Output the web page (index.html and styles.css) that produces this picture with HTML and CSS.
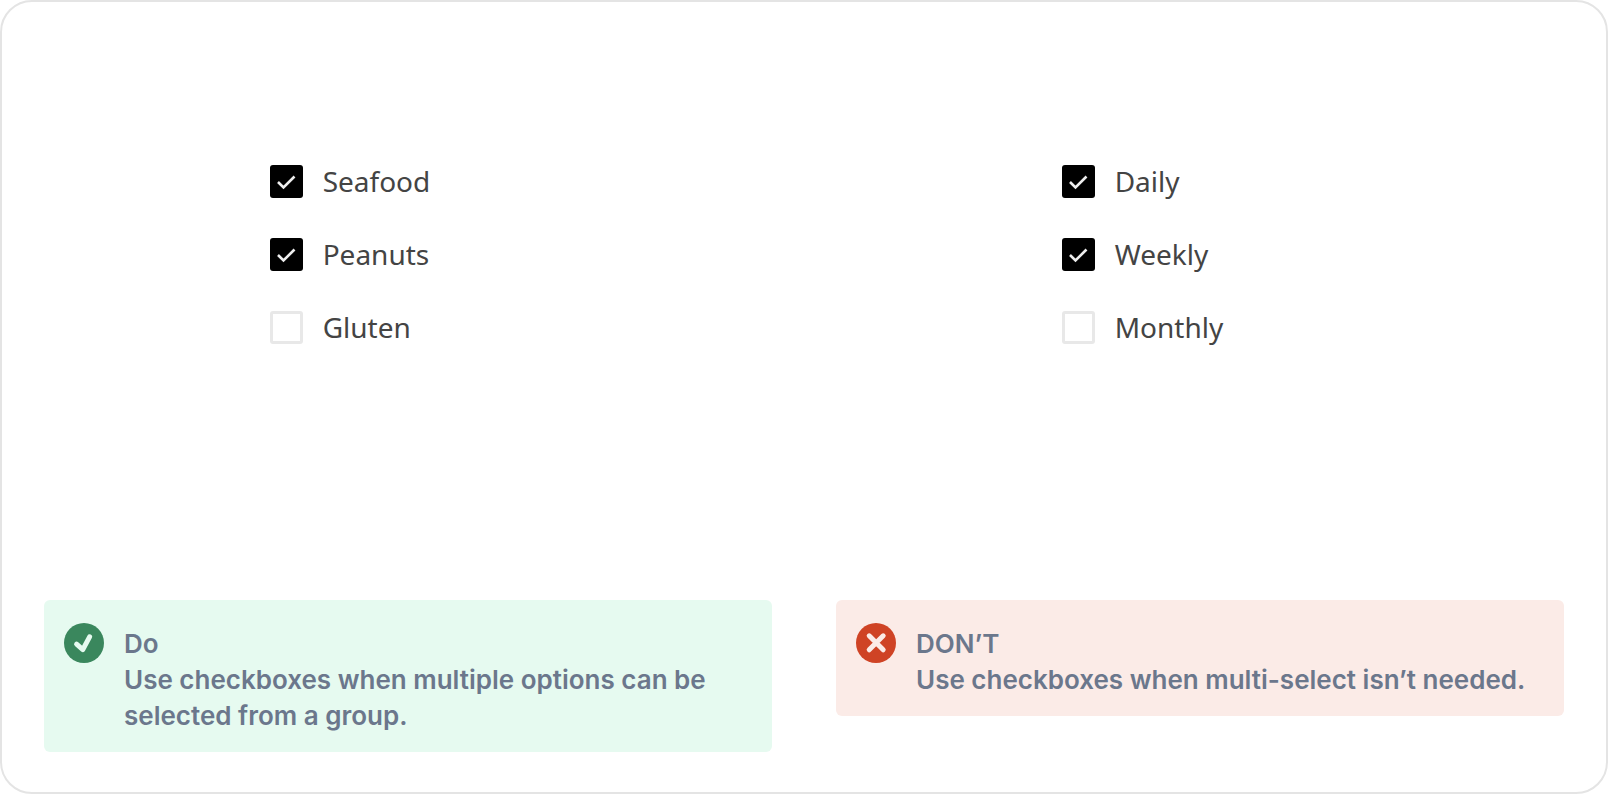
FILE: index.html
```html
<!DOCTYPE html>
<html lang="en">
<head>
<meta charset="utf-8">
<meta name="viewport" content="width=device-width, initial-scale=1">
<title>Checkbox guidelines</title>
<link rel="stylesheet" href="styles.css">
</head>
<body>
<main class="card">
  <section class="example">
    <div class="demo">
      <label class="option"><input class="box" type="checkbox" checked>Seafood</label>
      <label class="option"><input class="box" type="checkbox" checked>Peanuts</label>
      <label class="option"><input class="box" type="checkbox">Gluten</label>
    </div>
    <div class="note note-do">
      <svg class="icon" viewBox="0 0 40 40" aria-hidden="true">
        <circle cx="20" cy="20" r="20" fill="#3a875d"/>
        <path d="M12.6 21.2L18.8 26.6L25.6 13.8" fill="none" stroke="#e6faf0" stroke-width="5" stroke-linecap="round" stroke-linejoin="round"/>
      </svg>
      <div class="text">
        <p>Do</p>
        <p>Use checkboxes when multiple options can be selected from a group.</p>
      </div>
    </div>
  </section>
  <section class="example">
    <div class="demo">
      <label class="option"><input class="box" type="checkbox" checked>Daily</label>
      <label class="option"><input class="box" type="checkbox" checked>Weekly</label>
      <label class="option"><input class="box" type="checkbox">Monthly</label>
    </div>
    <div class="note note-dont">
      <svg class="icon" viewBox="0 0 40 40" aria-hidden="true">
        <circle cx="20" cy="20" r="20" fill="#cf4325"/>
        <path d="M13.2 12.8L27.2 26.8M27.2 12.8L13.2 26.8" fill="none" stroke="#fbebe7" stroke-width="5" stroke-linecap="round"/>
      </svg>
      <div class="text">
        <p>DON’T</p>
        <p>Use checkboxes when multi-select isn’t needed.</p>
      </div>
    </div>
  </section>
</main>
</body>
</html>
```
FILE: styles.css
```css
* {
  box-sizing: border-box;
}

body {
  margin: 0;
  background: #fff;
  font-family: Inter, "Liberation Sans", sans-serif;
}

.card {
  display: grid;
  grid-template-columns: 1fr 1fr;
  gap: 64px;
  align-items: start;
  min-height: 100vh;
  padding: 42px 42px 40px;
  border: 2px solid #e4e4e4;
  border-radius: 32px;
}

.demo {
  display: flex;
  flex-direction: column;
  align-items: flex-start;
  gap: 33px;
  padding: 117px 0 253px 31%;
}

.option {
  display: flex;
  align-items: center;
  gap: 20px;
  color: #444;
  font-family: "Noto Sans", sans-serif;
  font-size: 28px;
  line-height: 40px;
}

.box {
  appearance: none;
  width: 33px;
  height: 33px;
  margin: 0;
  border: 3px solid #e8e8e8;
  border-radius: 3px;
  background: #fff;
}

.box:checked {
  border: 0;
  background: #000 url('data:image/svg+xml,<svg xmlns="http://www.w3.org/2000/svg" viewBox="0 0 33 33"><path d="M8 17L13.5 22.5L24.5 11.5" fill="none" stroke="%23eee" stroke-width="2.6"/></svg>') center / 100% no-repeat;
}

.note {
  display: flex;
  align-items: flex-start;
  gap: 20px;
  padding: 23px 20px 18px;
  border-radius: 6px;
}

.note-do {
  background: #e6faf0;
}

.note-dont {
  background: #fbebe7;
}

.icon {
  flex: none;
  width: 40px;
  height: 40px;
}

.text {
  padding-top: 3px;
}

.text p {
  margin: 0;
  color: #6b778c;
  font-size: 26px;
  font-weight: 600;
  line-height: 36px;
}
```
